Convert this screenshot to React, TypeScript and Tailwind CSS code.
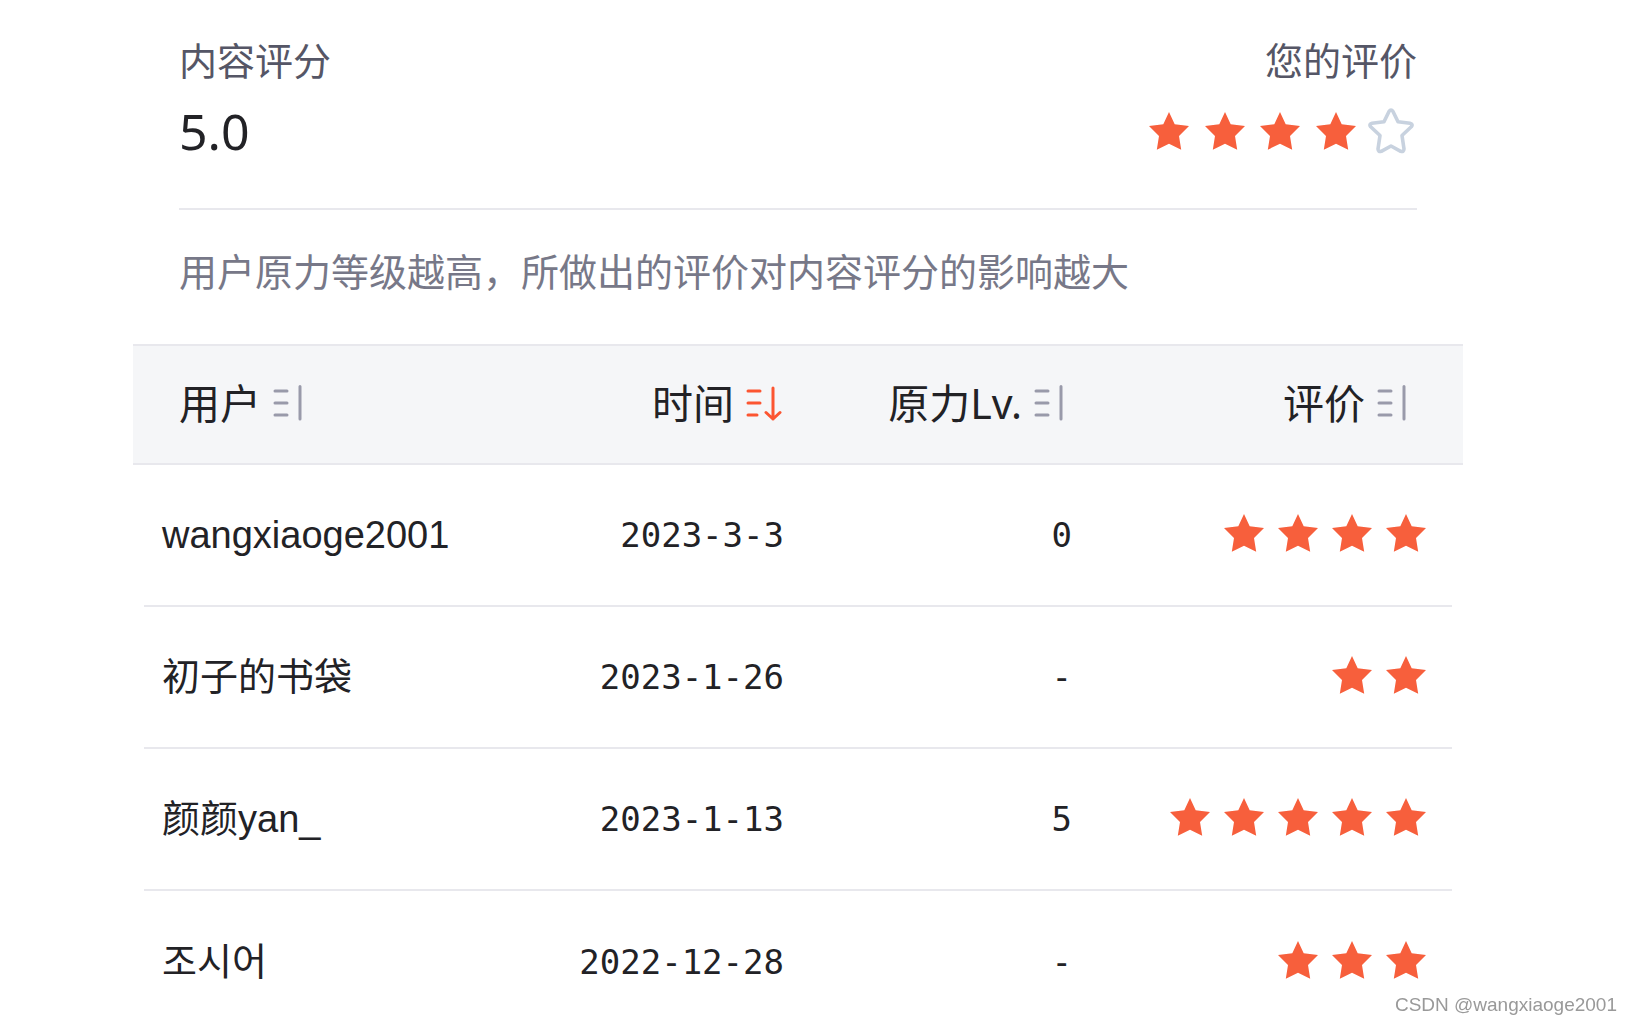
import { useState } from "react";

type SortKey = "user" | "time" | "level" | "rating";

interface Review {
  user: string;
  time: string;
  level: string;
  rating: number;
}

const REVIEWS: Review[] = [
  { user: "wangxiaoge2001", time: "2023-3-3", level: "0", rating: 4 },
  { user: "初子的书袋", time: "2023-1-26", level: "-", rating: 2 },
  { user: "颜颜yan_", time: "2023-1-13", level: "5", rating: 5 },
  { user: "조시어", time: "2022-12-28", level: "-", rating: 3 },
];

const COLUMNS: { key: SortKey; label: string }[] = [
  { key: "user", label: "用户" },
  { key: "time", label: "时间" },
  { key: "level", label: "原力Lv." },
  { key: "rating", label: "评价" },
];

function Star({ filled = true }: { filled?: boolean }) {
  if (!filled) {
    return (
      <svg viewBox="0 0 52 52" className="size-[52px]" aria-hidden="true">
        <path
          d="M24 6.500q2-3 4 0l5 10.300 12 1.500q3.500.8 1.300 3.500l-9.300 8.700 2 13.500q-.2 3.200-3.300 2.300L26 41l-9.700 5.300q-3.100.9-3.300-2.300l2-13.500-9.300-8.700q-2.200-2.700 1.300-3.500l12-1.500z"
          fill="none"
          stroke="#c8d2df"
          strokeWidth="3.6"
          strokeLinejoin="round"
        />
      </svg>
    );
  }
  return (
    <svg viewBox="0 0 52 52" className="size-[52px]" aria-hidden="true">
      <path
        d="M26 7l5.700 12.200L46 21l-10 10 2.200 13.700L26 38.700l-12.200 6L16 31 6 21l14.300-1.800z"
        fill="#f75f3c"
      />
    </svg>
  );
}

function SortIcon({ active }: { active: boolean }) {
  return (
    <svg
      viewBox="0 0 40 40"
      className={active ? "size-10 text-[#fc5531]" : "size-10 text-[#999aaa]"}
      fill="none"
      stroke="currentColor"
      strokeWidth="3"
      strokeLinecap="round"
      strokeLinejoin="round"
      aria-hidden="true"
    >
      {active ? (
        <path d="M2 8h12M2 20h12M2 32h9M27 5v31M20 29.500l7 6.500 7-6.500" />
      ) : (
        <path d="M2 8h12M2 20h12M2 32h12M27 3.500v32.500" />
      )}
    </svg>
  );
}

export default function App() {
  const [score, setScore] = useState(4);
  const [sortKey, setSortKey] = useState<SortKey>("time");

  return (
    <main className="min-h-screen bg-white pl-[133px] pr-[170px] pt-[34px] font-['Liberation_Sans','Noto_Sans_CJK_SC','Noto_Sans_CJK_KR',sans-serif] text-[#222226]">
      <section className="px-[46px]">
        <div className="flex justify-between border-b-2 border-[#e8e8ed] pb-9">
          <div>
            <h2 className="text-[38px] leading-[56px] text-[#555666]">内容评分</h2>
            <p className="font-['Noto_Sans',sans-serif] text-[50px] leading-[82px]">5.0</p>
          </div>
          <div className="flex flex-col items-end">
            <h2 className="text-[38px] leading-[56px] text-[#555666]">您的评价</h2>
            <div className="flex w-[274px] flex-1 items-center justify-between">
              {[1, 2, 3, 4, 5].map((n) => (
                <button key={n} type="button" aria-label={`${n} 星`} onClick={() => setScore(n)}>
                  <Star filled={n <= score} />
                </button>
              ))}
            </div>
          </div>
        </div>
        <p className="pt-8 pb-10 text-[38px] leading-[62px] text-[#777888]">
          用户原力等级越高，所做出的评价对内容评分的影响越大
        </p>
      </section>

      <table className="block">
        <thead className="block border-y-2 border-[#e8e8ed] bg-[#f5f6f8] px-[46px]">
          <tr className="grid h-[117px] grid-cols-[1fr_260px_288px_343px] items-center pb-1">
            {COLUMNS.map(({ key, label }) => (
              <th
                key={key}
                scope="col"
                className="flex justify-end font-['Noto_Sans','Noto_Sans_CJK_SC',sans-serif] text-[41px] leading-[56px] font-normal first:justify-start"
              >
                <button
                  type="button"
                  className="flex items-center gap-3 whitespace-nowrap"
                  onClick={() => setSortKey(key)}
                >
                  {label}
                  <SortIcon active={sortKey === key} />
                </button>
              </th>
            ))}
          </tr>
        </thead>
        <tbody className="block px-[11px]">
          {REVIEWS.map((r) => (
            <tr
              key={r.user}
              className="grid h-[142px] grid-cols-[1fr_260px_288px_360px] items-center border-b-2 border-[#e8e8ed] pr-5 pl-[18px] last:border-b-0"
            >
              <td className="text-[38px] leading-[56px]">{r.user}</td>
              <td className="text-right font-['DejaVu_Sans_Mono',monospace] text-[34px] leading-[58px]">
                {r.time}
              </td>
              <td className="text-right font-['DejaVu_Sans_Mono',monospace] text-[34px] leading-[58px]">
                {r.level}
              </td>
              <td className="flex justify-end gap-0.5 pb-1" aria-label={`${r.rating} 星`}>
                {Array.from({ length: r.rating }, (_, i) => (
                  <Star key={i} />
                ))}
              </td>
            </tr>
          ))}
        </tbody>
      </table>

      <p className="fixed right-4 bottom-2 text-[19px] leading-6 text-[#999999]">
        CSDN @wangxiaoge2001
      </p>
    </main>
  );
}
